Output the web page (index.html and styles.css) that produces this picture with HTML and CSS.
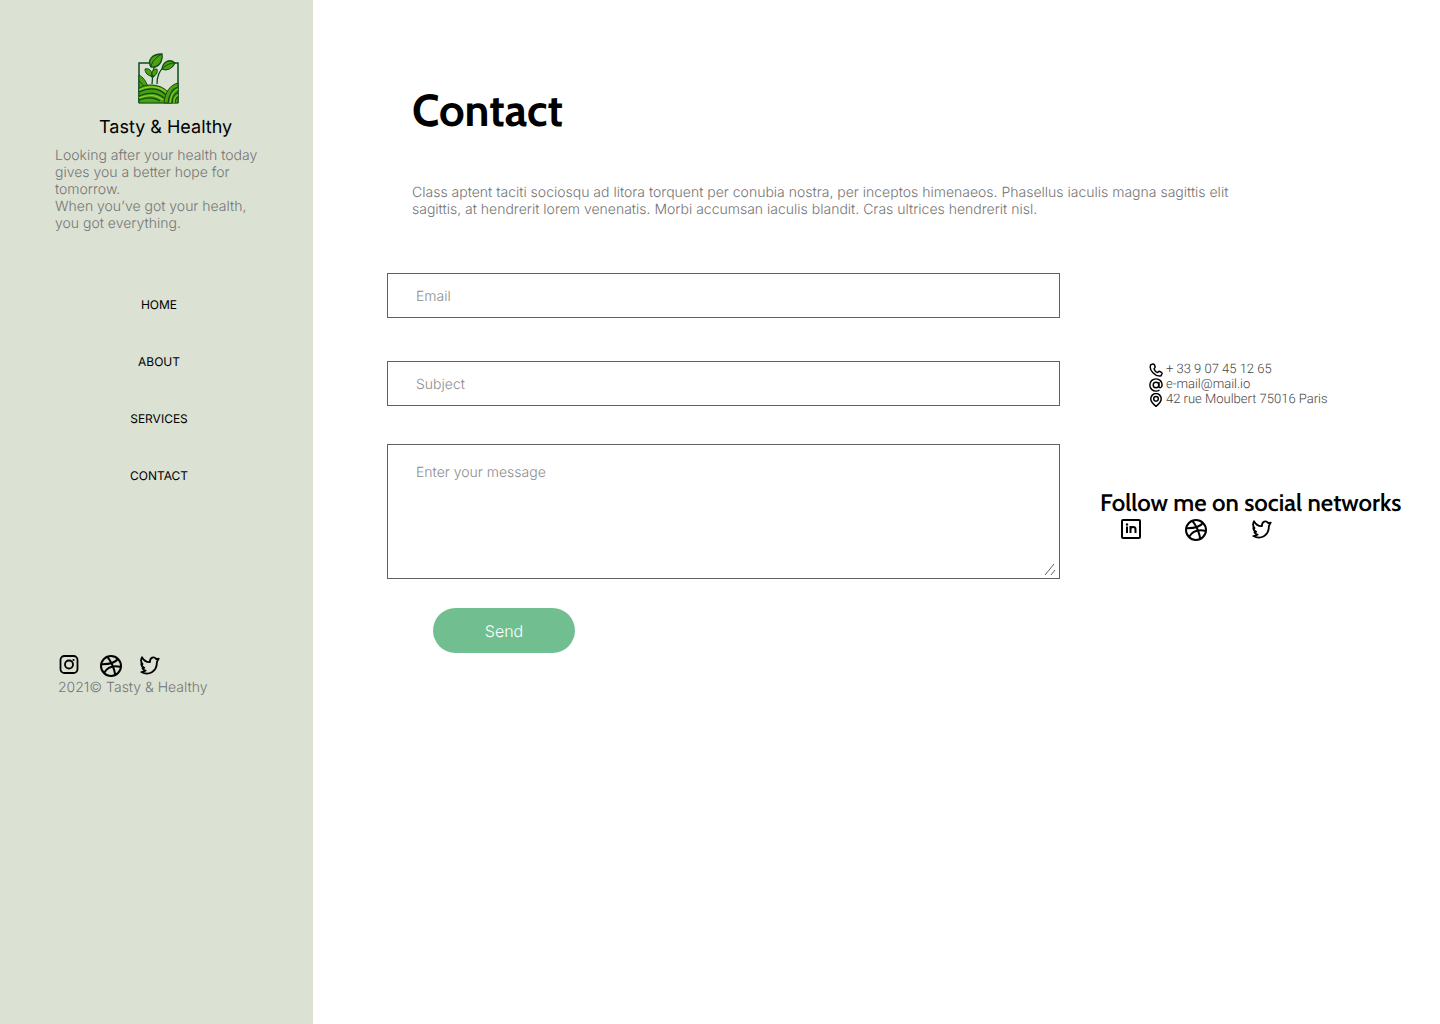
FILE: index.html
```html
<!DOCTYPE html>
<html lang="en">
<head>
<meta charset="utf-8">
<meta name="viewport" content="width=device-width, initial-scale=1">
<title>Contact - Tasty &amp; Healthy</title>
<link rel="stylesheet" href="styles.css">
</head>
<body>
<svg class="sprite" aria-hidden="true">
  <symbol id="dribbble" viewBox="0 0 24 24">
    <g fill="none" stroke="currentColor" stroke-width="2">
      <circle cx="12" cy="12" r="10"/>
      <path d="M8.2 2.7C12.500 8 15 13.500 16.300 21M2.300 10.200C9.500 10.400 15.500 9.200 19 5M5 19c3-5.200 9-8 17-6"/>
    </g>
  </symbol>
  <symbol id="twitter" viewBox="0 0 24 24">
    <path fill="none" stroke="currentColor" stroke-width="2" stroke-linejoin="round" d="M21.500 4c-1 .400-2 .500-2.900.200C16.500 1.300 11.900 2.600 11.800 7.800 8.500 8 5.500 6.500 3.200 2.500c-1.500 3-1 5.700.600 7.500l-1.300-.300c.200 2.200 1.400 3.600 3.200 4.400l-1.900.400c.700 1.500 1.800 2.300 3.400 2.600-1.300 1.100-2.900 1.500-4.700 1.500 8 4.300 17-.300 17-10.300 0-1.300.700-2.500 2-4.300z"/>
  </symbol>
</svg>
<div class="page">
  <header class="sidebar">
    <div class="brand">
      <svg class="logo" viewBox="0 0 41 51" aria-hidden="true">
        <path d="M14 10H1v39.500h39V10h-5" fill="none" stroke="#0b4d1c" stroke-width="1.500"/>
        <path d="M1 22c4 2 7 6 9 12l-9 4z" fill="#4fa00f" stroke="#0b4d1c"/>
        <path d="M1 28c3 2 4 4 6 8" fill="none" stroke="#0b4d1c"/>
        <path d="M1 35c8-5 22-4 29 4l4 11H1z" fill="#4fa00f" stroke="#0b4d1c"/>
        <path d="M1 39c11-5 21-4 28 4M1 43c9-4 18-4 25 2M1 47c8-3 15-3 21 1" fill="none" stroke="#0b4d1c" stroke-width="1.300"/>
        <path d="M1 37c10-5 22-4 29 4M1 45c9-4 18-3 24 2" fill="none" stroke="#97cf22" stroke-width="1.200"/>
        <path d="M40 30c-8 2-13 9-14 20h14z" fill="#4fa00f" stroke="#0b4d1c"/>
        <path d="M40 34c-6 2-9 8-10 16M40 39c-4 2-6 6-6 11M40 44c-2 1-3 3-3 6" fill="none" stroke="#0b4d1c" stroke-width="1.200"/>
        <path d="M40 36c-5 2-7 7-8 14M40 42c-3 2-4 4-4 8" fill="none" stroke="#97cf22"/>
        <path d="M14 31c1-8 0-13 3-19M19 31c0-8 2-13 7-17M14 24l-4-5M14 25l3-3" fill="none" stroke="#0b4d1c" stroke-width="1.300"/>
        <path d="M13 14C9 7 14 1 24 1c1 7-3 14-11 13z" fill="#4fa00f" stroke="#0b4d1c" stroke-width="1.300"/>
        <path d="M13 14C14 8 18 4 24 1" fill="none" stroke="#0b4d1c"/>
        <path d="M24 16c1-7 7-11 13-6-3 6-8 8-13 6z" fill="#4fa00f" stroke="#0b4d1c" stroke-width="1.300"/>
        <path d="M24 16c4-4 8-6 13-6" fill="none" stroke="#0b4d1c"/>
        <path d="M7 16c5-1 7 2 7 7-4 0-7-3-7-7zM14 23c-1-4 1-7 5-7 1 4-1 7-5 7z" fill="#4fa00f" stroke="#0b4d1c"/>
      </svg>
      <p class="brand-name">Tasty &amp; Healthy</p>
      <p class="tagline">Looking after your health today gives you a better hope for tomorrow.<br>When you’ve got your health, you got everything.</p>
    </div>
    <nav class="menu">
      <a href="#">HOME</a>
      <a href="#">ABOUT</a>
      <a href="#">SERVICES</a>
      <a href="#">CONTACT</a>
    </nav>
    <div class="sidebar-foot">
      <div class="foot-social">
        <a href="#" aria-label="Instagram"><svg class="icon-medium" viewBox="0 0 20 20"><g fill="none" stroke="currentColor" stroke-width="1.800"><rect x="1.500" y="1" width="17" height="17" rx="4"/><circle cx="10" cy="9.500" r="4"/></g><circle cx="14.500" cy="5" r="1.100"/></svg></a>
        <a href="#" aria-label="Dribbble"><svg class="icon-large"><use href="#dribbble"/></svg></a>
        <a href="#" aria-label="Twitter"><svg class="icon-bird"><use href="#twitter"/></svg></a>
      </div>
      <p class="copyright">2021© Tasty &amp; Healthy</p>
    </div>
  </header>
  <main class="content">
    <div class="intro">
      <h1>Contact</h1>
      <p>Class aptent taciti sociosqu ad litora torquent per conubia nostra, per inceptos himenaeos. Phasellus iaculis magna sagittis elit sagittis, at hendrerit lorem venenatis. Morbi accumsan iaculis blandit. Cras ultrices hendrerit nisl.</p>
    </div>
    <div class="columns">
      <form class="contact-form">
        <input type="email" aria-label="Email" placeholder="Email">
        <input type="text" aria-label="Subject" placeholder="Subject">
        <div class="message">
          <textarea aria-label="Message" placeholder="Enter your message"></textarea>
          <svg class="grip" viewBox="0 0 12 12" aria-hidden="true"><path d="M1 12L10 1M7 12l4-5" fill="none" stroke="#616161"/></svg>
        </div>
        <button type="submit">Send</button>
      </form>
      <aside class="details">
        <address>
          <a href="tel:+33907451265"><svg class="icon-small" viewBox="0 0 24 24"><path fill="none" stroke="currentColor" stroke-width="2.500" stroke-linejoin="round" d="M7 1.500L3 3C-1 12 11 24 20.500 22L22.500 18c.300-1-3.500-4-5.500-4l-2.500 2.500c-3-1-5-3.500-6-6.500L10.500 7.500C10.500 5 8.500 2 7 1.500z"/></svg>+ 33 9 07 45 12 65</a>
          <a href="mailto:e-mail@mail.io"><svg class="icon-small" viewBox="0 0 24 24"><g fill="none" stroke="currentColor" stroke-width="2.500"><circle cx="12" cy="12" r="4.800"/><path d="M17 7v7c0 4 5.500 3.500 5.500-2C22.500 6 18 1.500 12 1.500S1.500 6 1.500 12 6 22.500 12 22.500c2.500 0 4.500-.700 6-2"/></g></svg>e-mail@mail.io</a>
          <span><svg class="icon-small" viewBox="0 0 24 24"><g fill="none" stroke="currentColor" stroke-width="2.500"><path d="M12 23C7 19 3 15 3 10a9 9 0 0 1 18 0c0 5-4 9-9 13z"/><circle cx="12" cy="10" r="4"/></g></svg>42 rue Moulbert 75016 Paris</span>
        </address>
        <h2>Follow me on social networks</h2>
        <div class="social">
          <a href="#" aria-label="LinkedIn"><svg class="icon-medium" viewBox="0 0 20 20"><g fill="none" stroke="currentColor" stroke-width="2"><rect x="1" y="1" width="18" height="18" rx="1"/><path d="M6 7.500V14M9.500 14V7M9.500 10c0-2.800 5-2.800 5 0v4"/></g><circle cx="6" cy="5.500" r="1.200"/></svg></a>
          <a href="#" aria-label="Dribbble"><svg class="icon-large"><use href="#dribbble"/></svg></a>
          <a href="#" aria-label="Twitter"><svg class="icon-bird"><use href="#twitter"/></svg></a>
        </div>
      </aside>
    </div>
  </main>
</div>
</body>
</html>
```
FILE: styles.css
```css
* {
  box-sizing: border-box;
}

body,
h1,
h2,
p {
  margin: 0;
}

body {
  background: #fff;
  color: #000;
  font: 300 14px/17px Inter, sans-serif;
  text-rendering: geometricPrecision;
}

a {
  color: inherit;
  text-decoration: none;
}

svg {
  display: block;
  flex: none;
}

.sprite {
  display: none;
}

.page {
  display: flex;
  min-height: 100vh;
}

.sidebar {
  flex: none;
  width: 313px;
  padding: 53px 50px 40px 55px;
  background: #dbe1d3;
}

.logo {
  width: 41px;
  height: 51px;
  margin-left: 83px;
}

.brand-name {
  margin: 12px 0 8px 44px;
  font-size: 18px;
  font-weight: 400;
  line-height: 23px;
}

.tagline,
.copyright,
.intro p {
  color: #757575;
}

.menu {
  display: flex;
  flex-direction: column;
  align-items: center;
  gap: 40px;
  margin-top: 64px;
  font-size: 12px;
  font-weight: 400;
}

.sidebar-foot {
  margin-top: 170px;
  padding-left: 3px;
}

.foot-social {
  display: flex;
  gap: 20px;
  padding-left: 1px;
}

.foot-social a:last-child {
  margin-left: -4px;
}

.copyright {
  padding-top: 1px;
}

.icon-small {
  width: 14px;
  height: 14px;
}

.icon-medium {
  width: 20px;
  height: 20px;
  margin-top: 1px;
}

.icon-bird {
  width: 22px;
  height: 24px;
}

.icon-large {
  width: 24px;
  height: 24px;
}

.content {
  flex: 1;
  min-width: 0;
  padding: 82px 38px 40px 74px;
}

.intro {
  max-width: 875px;
  padding-left: 25px;
}

h1 {
  margin-bottom: 44px;
  font: 700 45px/58px Cabin, Lato, sans-serif;
}

.columns {
  display: flex;
  gap: 40px;
  margin-top: 55px;
}

.contact-form {
  display: flex;
  flex: 1;
  flex-direction: column;
  align-items: stretch;
  min-width: 0;
}

.contact-form input,
.contact-form textarea {
  display: block;
  width: 100%;
  margin: 0;
  padding: 2px 28px 0;
  border: 1px solid #616161;
  border-radius: 0;
  background: #fff;
  font: inherit;
  text-rendering: inherit;
}

.contact-form input {
  height: 45px;
  margin-bottom: 43px;
}

.contact-form input + .message {
  margin-top: -5px;
}

.contact-form textarea {
  height: 135px;
  padding-top: 19px;
  resize: none;
}

::placeholder {
  color: #8c8c8c;
}

.message {
  position: relative;
}

.grip {
  position: absolute;
  right: 4px;
  bottom: 4px;
  width: 12px;
  height: 12px;
}

button {
  width: 142px;
  height: 45px;
  margin: 29px 0 0 46px;
  border: 0;
  border-radius: 23px;
  background: #71bf91;
  color: #fff;
  font: 300 16px/20px Inter, sans-serif;
  text-rendering: inherit;
}

.details {
  flex: none;
  width: 302px;
  padding-top: 89px;
}

address {
  display: flex;
  flex-direction: column;
  padding-left: 49px;
  color: #444;
  font: 300 13px/15px Roboto, sans-serif;
}

address a,
address span {
  display: flex;
  align-items: center;
  gap: 3px;
}

address svg {
  color: #000;
}

h2 {
  margin-top: 81px;
  font: 600 24px/30px Cabin, Lato, sans-serif;
  white-space: nowrap;
}

.social {
  display: flex;
  gap: 43px;
  padding-left: 21px;
}
```
